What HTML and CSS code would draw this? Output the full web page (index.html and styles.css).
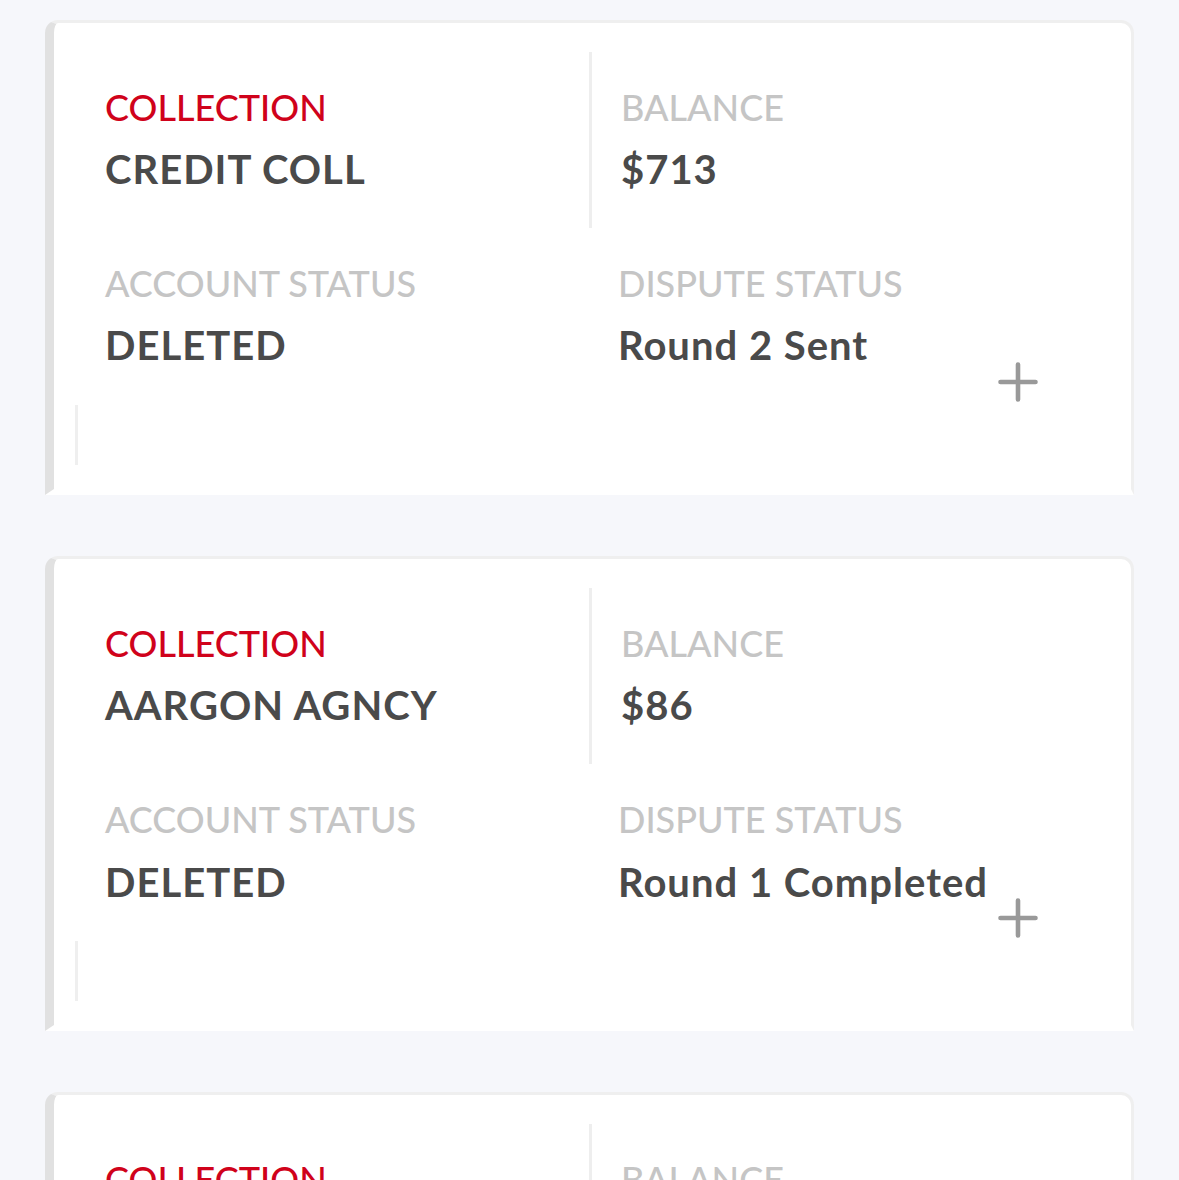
FILE: index.html
```html
<!DOCTYPE html>
<html lang="en">
<head>
<meta charset="utf-8">
<title>Accounts</title>
<link rel="stylesheet" href="styles.css">
</head>
<body>
<main class="list">
  <section class="card">
    <div class="row top">
      <div class="cell left">
        <div class="label red">COLLECTION</div>
        <div class="value">CREDIT COLL</div>
      </div>
      <div class="cell right">
        <div class="label">BALANCE</div>
        <div class="value">$713</div>
      </div>
    </div>
    <div class="row bottom">
      <div class="cell left">
        <div class="label">ACCOUNT STATUS</div>
        <div class="value">DELETED</div>
      </div>
      <div class="cell right2">
        <div class="label">DISPUTE STATUS</div>
        <div class="value">Round 2 Sent</div>
      </div>
      <div class="plus">
        <svg width="40" height="40" viewBox="0 0 40 40"><path d="M20 2.5V37.5M2.5 20H37.5" stroke="#999" stroke-width="4.6" stroke-linecap="round" fill="none"/></svg>
      </div>
    </div>
    <div class="stub"></div>
  </section>

  <section class="card">
    <div class="row top">
      <div class="cell left">
        <div class="label red">COLLECTION</div>
        <div class="value">AARGON AGNCY</div>
      </div>
      <div class="cell right">
        <div class="label">BALANCE</div>
        <div class="value">$86</div>
      </div>
    </div>
    <div class="row bottom">
      <div class="cell left">
        <div class="label">ACCOUNT STATUS</div>
        <div class="value">DELETED</div>
      </div>
      <div class="cell right2">
        <div class="label">DISPUTE STATUS</div>
        <div class="value">Round 1 Completed</div>
      </div>
      <div class="plus">
        <svg width="40" height="40" viewBox="0 0 40 40"><path d="M20 2.5V37.5M2.5 20H37.5" stroke="#999" stroke-width="4.6" stroke-linecap="round" fill="none"/></svg>
      </div>
    </div>
    <div class="stub"></div>
  </section>

  <section class="card">
    <div class="row top">
      <div class="cell left">
        <div class="label red">COLLECTION</div>
        <div class="value">MIDLAND FUNDING</div>
      </div>
      <div class="cell right">
        <div class="label">BALANCE</div>
        <div class="value">$1,024</div>
      </div>
    </div>
  </section>
</main>
</body>
</html>
```

FILE: styles.css
```css
* { box-sizing: border-box; }

html, body {
  margin: 0;
  padding: 0;
  background: #f6f7fb;
  font-family: "Lato", "Liberation Sans", sans-serif;
  overflow: hidden;
}

.list {
  padding: 20px 45px 0 45px;
  width: 1179px;
}

.card {
  width: 1089px;
  background: #fff;
  border-top: 3px solid #efefef;
  border-right: 3px solid #efefef;
  border-left: 9px solid #e1e1e1;
  border-bottom: 6px solid #fff;
  border-radius: 13px 13px 0 0;
  padding-top: 29px;
  padding-bottom: 24px;
  margin-bottom: 61px;
}

.row {
  display: grid;
}

.row.top {
  grid-template-columns: 538px 1fr;
}

.row.top .left {
  border-right: 3px solid #eeeeee;
  padding: 34px 0 35px 51px;
}

.row.top .right {
  padding: 34px 0 0 29px;
}

.row.bottom {
  grid-template-columns: 538px 1fr auto;
}

.row.bottom .left {
  padding: 34px 0 0 51px;
}

.row.bottom .right2 {
  padding: 34px 0 0 26px;
}

.label {
  font-size: 36px;
  line-height: 1.2;
  font-weight: 500;
  color: #c5c5c5;
  white-space: nowrap;
}

.label.red {
  color: #d0021b;
}

.value {
  margin-top: 16px;
  font-size: 40px;
  line-height: 1.2;
  font-weight: 700;
  letter-spacing: 1px;
  color: #4a4a4a;
  white-space: nowrap;
}

.plus {
  width: 40px;
  height: 40px;
  margin-top: 134px;
  margin-right: 93px;
}

.plus svg { display: block; }

.stub {
  width: 3px;
  height: 60px;
  margin: 3px 0 0 21px;
  background: #efefef;
}
```
